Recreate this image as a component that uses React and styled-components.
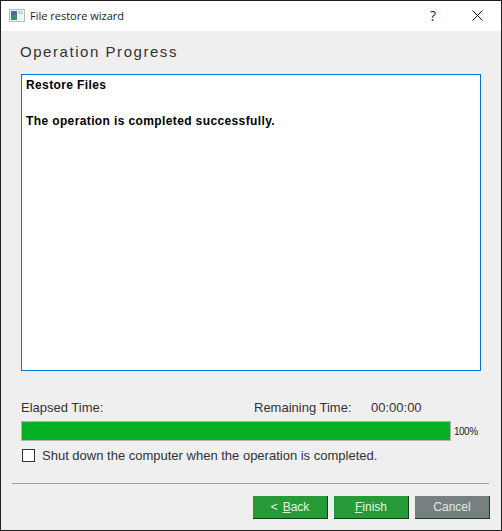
import styled, { createGlobalStyle } from "styled-components";

const GlobalStyle = createGlobalStyle`
  html, body {
    margin: 0;
    padding: 0;
    background: #efefef;
  }
  #root {
    width: 502px;
    height: 531px;
  }
`;

const Window = styled.div`
  box-sizing: border-box;
  width: 502px;
  height: 531px;
  border: 1px solid #1f1f1f;
  background: #efefef;
  display: flex;
  flex-direction: column;
  font-family: "Liberation Sans", Arial, sans-serif;
  color: #2a2a2a;
`;

const TitleBar = styled.div`
  box-sizing: border-box;
  height: 30px;
  background: #fff;
  display: flex;
  align-items: center;
  padding: 0 0 1px 8px;
  flex-shrink: 0;
`;

const TitleText = styled.span`
  font-family: "Open Sans", sans-serif;
  font-size: 11px;
  color: #1a1a1a;
  margin-left: 5px;
  flex: 1;
`;

const HelpButton = styled.span`
  font-family: "Open Sans", sans-serif;
  font-size: 14px;
  color: #222;
  width: 16px;
  text-align: center;
  margin-right: 31px;
`;

const CloseButton = styled.svg`
  width: 11px;
  height: 11px;
  margin-right: 18px;
`;

const Body = styled.div`
  flex: 1;
  display: flex;
  flex-direction: column;
  padding: 0 11px;
`;

const Inner = styled.div`
  padding: 0 9px 0 9px;
  display: flex;
  flex-direction: column;
`;

const Heading = styled.h1`
  margin: 11px 0 13px -1px;
  height: 19px;
  font-size: 15px;
  line-height: 19px;
  font-weight: normal;
  letter-spacing: 1.55px;
  color: #333;
`;

const LogBox = styled.div`
  box-sizing: border-box;
  width: 460px;
  height: 297px;
  background: #fff;
  border: 1px solid #0078d7;
  padding: 2px 4px;
  font-family: "Liberation Sans", Arial, sans-serif;
  font-size: 12px;
  font-weight: bold;
  line-height: 17.75px;
  letter-spacing: 0.38px;
  color: #000;
`;

const LogLine = styled.div`
  min-height: 17.75px;
`;

const TimeRow = styled.div`
  display: flex;
  margin-top: 30px;
  height: 14px;
  font-size: 13px;
  line-height: 14px;
  color: #333;
`;

const TimeLabel = styled.span`
  width: ${(props) => props.width}px;
`;

const ProgressRow = styled.div`
  display: flex;
  align-items: center;
  margin-top: 6px;
`;

const ProgressTrack = styled.div`
  box-sizing: border-box;
  width: 430px;
  height: 20px;
  border: 1px solid #b4b4b4;
  background: #e6e6e6;
`;

const ProgressFill = styled.div`
  height: 100%;
  background: #06b025;
`;

const Percent = styled.span`
  margin-left: 3px;
  font-size: 10px;
  letter-spacing: -0.5px;
  color: #222;
`;

const CheckRow = styled.label`
  display: flex;
  align-items: center;
  margin-top: 7px;
  height: 14px;
  font-size: 13px;
  color: #333;
`;

const CheckBox = styled.span`
  box-sizing: border-box;
  width: 13px;
  height: 13px;
  margin-left: 1px;
  border: 1px solid #333;
  background: #fff;
`;

const CheckText = styled.span`
  margin-left: 7px;
`;

const Divider = styled.div`
  height: 1px;
  background: #a0a0a0;
  margin-top: 21px;
  width: 477px;
`;

const ButtonRow = styled.div`
  display: flex;
  justify-content: flex-end;
  gap: 6px;
  margin-top: 12px;
  width: 478px;
`;

const Button = styled.button`
  box-sizing: border-box;
  width: 75px;
  height: 23px;
  padding: 0;
  border: none;
  border-right: 1px solid #143d1c;
  border-bottom: 1px solid #143d1c;
  background: ${(props) => (props.disabled ? "#768080" : "#259a37")};
  color: ${(props) => (props.disabled ? "#e4e8e8" : "#e8f4ea")};
  font-family: "Liberation Sans", Arial, sans-serif;
  font-size: 12px;
`;

const BackArrow = styled.span`
  margin-right: 5px;
`;

const Key = styled.span`
  text-decoration: underline;
`;

const App = () => {
  const progress = 100;

  return (
    <>
      <GlobalStyle />
      <Window>
        <TitleBar>
          <svg width="16" height="16" viewBox="0 0 16 16">
            <rect x="0.5" y="1.5" width="15" height="12" fill="#f4f6f6" stroke="#b8bcbc" />
            <rect x="2" y="3" width="6" height="9" fill="#3f8a80" />
            <rect x="2" y="3" width="6" height="4" fill="#4a6f9c" />
            <rect x="9" y="3" width="5" height="3" fill="#c8d8d8" />
          </svg>
          <TitleText>File restore wizard</TitleText>
          <HelpButton>?</HelpButton>
          <CloseButton viewBox="0 0 11 11">
            <path d="M0.5 0.5L10.5 10.5M10.5 0.5L0.5 10.5" stroke="#111" strokeWidth="1" fill="none" />
          </CloseButton>
        </TitleBar>
        <Body>
          <Inner>
            <Heading>Operation Progress</Heading>
            <LogBox>
              <LogLine>Restore Files</LogLine>
              <LogLine />
              <LogLine>The operation is completed successfully.</LogLine>
            </LogBox>
            <TimeRow>
              <TimeLabel width={233}>Elapsed Time:</TimeLabel>
              <TimeLabel width={117}>Remaining Time:</TimeLabel>
              <TimeLabel width={60}>00:00:00</TimeLabel>
            </TimeRow>
            <ProgressRow>
              <ProgressTrack>
                <ProgressFill style={{ width: `${progress}%` }} />
              </ProgressTrack>
              <Percent>{progress}%</Percent>
            </ProgressRow>
            <CheckRow>
              <CheckBox />
              <CheckText>Shut down the computer when the operation is completed.</CheckText>
            </CheckRow>
          </Inner>
          <Divider />
          <ButtonRow>
            <Button><BackArrow>&lt;</BackArrow><Key>B</Key>ack</Button>
            <Button><Key>F</Key>inish</Button>
            <Button disabled>Cancel</Button>
          </ButtonRow>
        </Body>
      </Window>
    </>
  );
};

export default App;
